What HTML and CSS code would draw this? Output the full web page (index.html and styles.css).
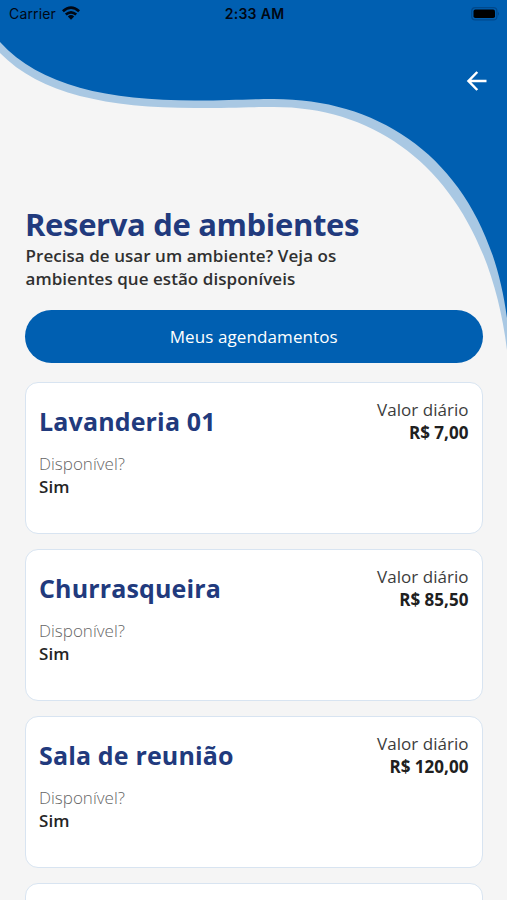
FILE: index.html
```html
<!DOCTYPE html>
<html lang="pt-BR">
<head>
<meta charset="utf-8">
<title>Reserva de ambientes</title>
<link rel="stylesheet" href="styles.css">
</head>
<body>
<div class="screen">
  <svg class="wave" viewBox="0 0 507 360" aria-hidden="true">
    <path fill="#a9c8e3" d="M0 0V53C40 94 108 108 195 108C230 108 245 107 274 107C398 107 488 196 507 350V0Z"/>
    <path fill="#005fb1" d="M0 0V42C40 86 108 100.5 195 100.5C230 100.5 245 99 274 99C394 99 488 174 507 318V0Z"/>
  </svg>
  <header class="status">
    <div class="carrier"><span>Carrier</span>
      <svg class="wifi" viewBox="0 0 18 14" aria-hidden="true"><g fill="none" stroke="#000814" stroke-width="2.7"><path d="M.9 5.2Q9-2 17.1 5.2"/><path d="M3.8 8.5Q9 4.1 14.2 8.5"/></g><path fill="#000814" d="M5.8 10.4Q9 7.8 12.2 10.4L9 13.7Z"/></svg>
    </div>
    <span class="time">2:33 AM</span>
    <svg class="battery" viewBox="0 0 30 14" aria-hidden="true"><rect x=".7" y=".7" width="25.2" height="12.2" rx="3.5" fill="none" stroke="#00498c" stroke-width="1.2"/><rect x="2.5" y="2.6" width="21.5" height="8.5" rx="1.8" fill="#000"/><path d="M27 4.8Q29 6.8 27 8.8Z" fill="#00498c"/></svg>
  </header>
  <nav class="nav">
    <svg class="back" viewBox="0 0 22 22" role="img" aria-label="Voltar"><path d="M20.5 11H2.5M11.3 2L2.5 11L11.3 20" fill="none" stroke="#fff" stroke-width="2.5"/></svg>
  </nav>
  <main class="content">
    <h1 class="title">Reserva de ambientes</h1>
    <p class="intro">Precisa de usar um ambiente? Veja os<br>ambientes que estão disponíveis</p>
    <button class="button">Meus agendamentos</button>
    <section class="list">
      <article class="card">
        <div><h2 class="name">Lavanderia 01</h2><p class="label">Disponível?</p><p class="answer">Sim</p></div>
        <div class="price"><p>Valor diário</p><strong>R$ 7,00</strong></div>
      </article>
      <article class="card">
        <div><h2 class="name">Churrasqueira</h2><p class="label">Disponível?</p><p class="answer">Sim</p></div>
        <div class="price"><p>Valor diário</p><strong>R$ 85,50</strong></div>
      </article>
      <article class="card">
        <div><h2 class="name">Sala de reunião</h2><p class="label">Disponível?</p><p class="answer">Sim</p></div>
        <div class="price"><p>Valor diário</p><strong>R$ 120,00</strong></div>
      </article>
      <article class="card"></article>
    </section>
  </main>
</div>
</body>
</html>
```
FILE: styles.css
```css
* { box-sizing: border-box; }
body { margin: 0; background: #f5f5f5; font-family: "Open Sans", "Noto Sans", sans-serif; color: #252525; }
h1, h2, p { margin: 0; }
.screen { position: relative; height: 900px; overflow: hidden; }
.wave { position: absolute; top: 0; left: 0; width: 507px; height: 360px; }
.status { position: relative; display: grid; grid-template-columns: 1fr auto 1fr; align-items: center; height: 27px; padding: 0 6px 0 9px; font-family: Inter, Roboto, sans-serif; font-size: 14px; color: #000814; }
.carrier { display: flex; align-items: center; gap: 6px; letter-spacing: .15px; }
.wifi { width: 18px; height: 14px; margin-top: -1px; }
.time { font-weight: 600; letter-spacing: .3px; margin-left: -1px; }
.battery { width: 30px; height: 14px; justify-self: end; }
.nav { position: relative; display: flex; justify-content: flex-end; padding: 43px 19px 0 0; height: 177px; }
.back { width: 22px; height: 22px; }
.content { position: relative; padding: 0 25px; }
.title { font-size: 31px; line-height: 40px; font-weight: 700; letter-spacing: -.35px; color: #213a7d; }
.intro { padding-left: .5px; font-size: 17px; line-height: 23px; font-weight: 600; letter-spacing: .05px; color: #303030; }
.button { display: block; width: 457.5px; height: 53px; margin-top: 20px; border: 0; border-radius: 27px; background: #005fb1; color: #fff; font: 400 17px/23px "Open Sans", sans-serif; letter-spacing: .1px; }
.list { display: flex; flex-direction: column; gap: 15px; width: 457.5px; margin-top: 19px; }
.card { display: flex; justify-content: space-between; height: 152px; flex: none; padding: 14px 13px; border: 1.5px solid #d8e4f1; border-radius: 13px; background: #fff; }
.name { margin-top: 5px; font-size: 25px; line-height: 38px; font-weight: 700; letter-spacing: .15px; color: #213a7d; }
.label { margin-top: 12px; font-size: 17px; line-height: 23px; font-weight: 300; color: #666; }
.answer { font-size: 17px; line-height: 23px; font-weight: 600; letter-spacing: .05px; }
.price { margin-top: 1px; text-align: right; font-size: 17px; line-height: 23px; letter-spacing: .03px; color: #3c3c3c; }
.price strong { font-weight: 700; color: #202020; }
```
